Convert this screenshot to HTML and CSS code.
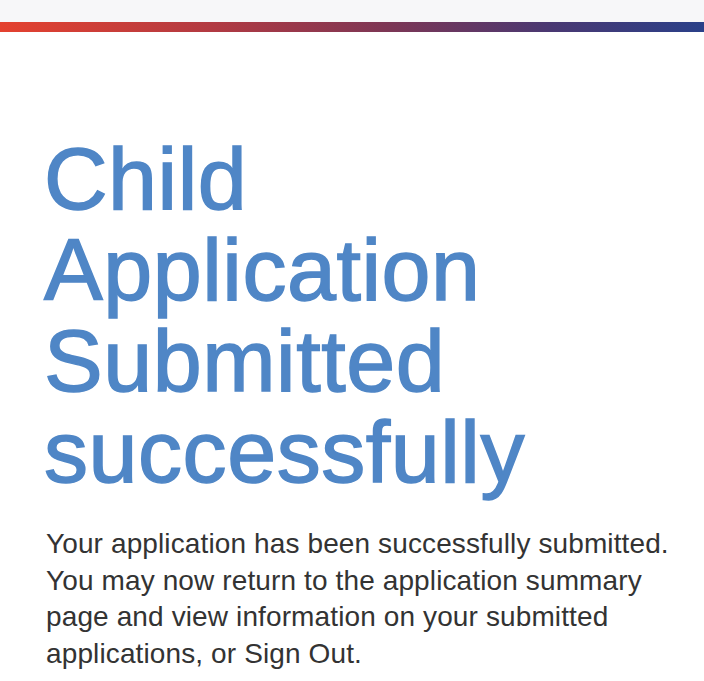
FILE: index.html
```html
<!DOCTYPE html>
<html lang="en">
<head>
<meta charset="utf-8">
<title>Child Application Submitted successfully</title>
<link rel="stylesheet" href="styles.css">
</head>
<body>
<header class="topbar"></header>
<div class="accent"></div>
<main class="content">
  <h1 class="title">Child Application Submitted successfully</h1>
  <p class="message">Your application has been successfully submitted. You may now return to the application summary page and view information on your submitted applications, or Sign Out.</p>
</main>
</body>
</html>
```
FILE: styles.css
```css
html, body {
  margin: 0;
  padding: 0;
  background: #ffffff;
}
body {
  font-family: "Liberation Sans", Arial, Helvetica, sans-serif;
}
.topbar {
  height: 22px;
  background: #f7f7f9;
}
.accent {
  height: 10px;
  background: linear-gradient(90deg, #e4412f 0%, #b23a42 30%, #7d3655 55%, #4a3872 78%, #2a4089 100%);
}
.content {
  padding: 101px 40px 0 44px;
}
.title {
  margin: 0;
  font-size: 88px;
  line-height: 91px;
  font-weight: normal;
  letter-spacing: 0.55px;
  color: #4f86c6;
  -webkit-text-stroke: 1.5px #4f86c6;
  width: 580px;
}
.message {
  margin: 29px 0 0 2px;
  font-size: 28px;
  line-height: 36.5px;
  letter-spacing: 0.12px;
  color: #333333;
  width: 650px;
}
```
